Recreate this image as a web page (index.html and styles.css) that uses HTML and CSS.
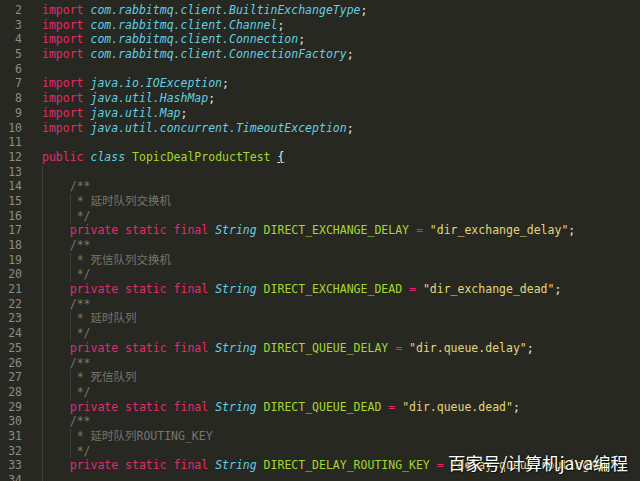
FILE: index.html
```html
<!DOCTYPE html>
<html lang="en">
<head>
  <meta charset="UTF-8" />
  <title>TopicDealProductTest.java</title>
  <link rel="stylesheet" href="styles.css">
</head>
<body>
  <div class="editor">
    <div class="ln"><span class="no">2</span><span class="code"><span class="kw">import</span> <span class="ty">com.rabbitmq.client.BuiltinExchangeType</span>;</span></div>
    <div class="ln"><span class="no">3</span><span class="code"><span class="kw">import</span> <span class="ty">com.rabbitmq.client.Channel</span>;</span></div>
    <div class="ln"><span class="no">4</span><span class="code"><span class="kw">import</span> <span class="ty">com.rabbitmq.client.Connection</span>;</span></div>
    <div class="ln"><span class="no">5</span><span class="code"><span class="kw">import</span> <span class="ty">com.rabbitmq.client.ConnectionFactory</span>;</span></div>
    <div class="ln"><span class="no">6</span><span class="code"></span></div>
    <div class="ln"><span class="no">7</span><span class="code"><span class="kw">import</span> <span class="ty">java.io.IOException</span>;</span></div>
    <div class="ln"><span class="no">8</span><span class="code"><span class="kw">import</span> <span class="ty">java.util.HashMap</span>;</span></div>
    <div class="ln"><span class="no">9</span><span class="code"><span class="kw">import</span> <span class="ty">java.util.Map</span>;</span></div>
    <div class="ln"><span class="no">10</span><span class="code"><span class="kw">import</span> <span class="ty">java.util.concurrent.TimeoutException</span>;</span></div>
    <div class="ln"><span class="no">11</span><span class="code"></span></div>
    <div class="ln"><span class="no">12</span><span class="code"><span class="kw">public</span> <span class="ty">class</span> <span class="nm">TopicDealProductTest</span> <span class="brace">{</span></span></div>
    <div class="ln"><span class="no">13</span><span class="code g1"></span></div>

    <div class="ln"><span class="no">14</span><span class="code g1">    <span class="cm">/**</span></span></div>
    <div class="ln"><span class="no">15</span><span class="code g2">     <span class="cm">* 延时队列交换机</span></span></div>
    <div class="ln"><span class="no">16</span><span class="code g2">     <span class="cm">*/</span></span></div>
    <div class="ln"><span class="no">17</span><span class="code g1">    <span class="kw">private static final</span> <span class="ty">String</span> <span class="nm">DIRECT_EXCHANGE_DELAY</span> <span class="kw">=</span> <span class="st">"dir_exchange_delay"</span>;</span></div>

    <div class="ln"><span class="no">18</span><span class="code g1">    <span class="cm">/**</span></span></div>
    <div class="ln"><span class="no">19</span><span class="code g2">     <span class="cm">* 死信队列交换机</span></span></div>
    <div class="ln"><span class="no">20</span><span class="code g2">     <span class="cm">*/</span></span></div>
    <div class="ln"><span class="no">21</span><span class="code g1">    <span class="kw">private static final</span> <span class="ty">String</span> <span class="nm">DIRECT_EXCHANGE_DEAD</span> <span class="kw">=</span> <span class="st">"dir_exchange_dead"</span>;</span></div>

    <div class="ln"><span class="no">22</span><span class="code g1">    <span class="cm">/**</span></span></div>
    <div class="ln"><span class="no">23</span><span class="code g2">     <span class="cm">* 延时队列</span></span></div>
    <div class="ln"><span class="no">24</span><span class="code g2">     <span class="cm">*/</span></span></div>
    <div class="ln"><span class="no">25</span><span class="code g1">    <span class="kw">private static final</span> <span class="ty">String</span> <span class="nm">DIRECT_QUEUE_DELAY</span> <span class="kw">=</span> <span class="st">"dir.queue.delay"</span>;</span></div>

    <div class="ln"><span class="no">26</span><span class="code g1">    <span class="cm">/**</span></span></div>
    <div class="ln"><span class="no">27</span><span class="code g2">     <span class="cm">* 死信队列</span></span></div>
    <div class="ln"><span class="no">28</span><span class="code g2">     <span class="cm">*/</span></span></div>
    <div class="ln"><span class="no">29</span><span class="code g1">    <span class="kw">private static final</span> <span class="ty">String</span> <span class="nm">DIRECT_QUEUE_DEAD</span> <span class="kw">=</span> <span class="st">"dir.queue.dead"</span>;</span></div>

    <div class="ln"><span class="no">30</span><span class="code g1">    <span class="cm">/**</span></span></div>
    <div class="ln"><span class="no">31</span><span class="code g2">     <span class="cm">* 延时队列ROUTING_KEY</span></span></div>
    <div class="ln"><span class="no">32</span><span class="code g2">     <span class="cm">*/</span></span></div>
    <div class="ln"><span class="no">33</span><span class="code g1">    <span class="kw">private static final</span> <span class="ty">String</span> <span class="nm">DIRECT_DELAY_ROUTING_KEY</span> <span class="kw">=</span> <span class="st">"delay.queue.routingKey"</span>;</span></div>
    <div class="ln"><span class="no">34</span><span class="code g1"></span></div>
  </div>

  <div class="watermark">百家号/计算机java编程</div>
</body>
</html>
```

FILE: styles.css
```css
html, body {
  margin: 0;
  height: 100%;
  overflow: hidden;
  background-color: #272822;
}
.editor {
  padding-top: 3px;
  font-family: 'DejaVu Sans Mono', 'Noto Sans CJK SC', monospace;
  font-size: 11.5px;
  color: #e8e8e2;
}
.ln {
  display: flex;
  height: 14.7px;
  line-height: 14.7px;
}
.no {
  width: 22px;
  flex-shrink: 0;
  text-align: right;
  color: #8c8c86;
}
.code {
  margin-left: 20px;
  flex: 1;
  white-space: pre;
}
.g1 {
  background-image: linear-gradient(#3e3d36, #3e3d36);
  background-repeat: no-repeat;
  background-size: 1px 100%;
  background-position: 0 0;
}
.g2 {
  background-image: linear-gradient(#3e3d36, #3e3d36), linear-gradient(#3e3d36, #3e3d36);
  background-repeat: no-repeat;
  background-size: 1px 100%, 1px 100%;
  background-position: 0 0, 27.6px 0;
}
.kw {
  color: #e42a6c;
}
.ty {
  color: #62cfe2;
  font-style: italic;
}
.nm {
  color: #a6d72e;
}
.st {
  color: #e2d67a;
}
.cm {
  color: #77766e;
}
.brace {
  text-decoration: underline;
}
.watermark {
  position: absolute;
  right: 12px;
  bottom: 7px;
  font-family: 'Noto Sans CJK SC', 'Noto Sans', sans-serif;
  font-size: 17.5px;
  line-height: 22px;
  color: #ffffff;
  text-shadow: 0 0 2px rgba(0, 0, 0, 0.7), 1px 1px 1px rgba(0, 0, 0, 0.6);
}
```
